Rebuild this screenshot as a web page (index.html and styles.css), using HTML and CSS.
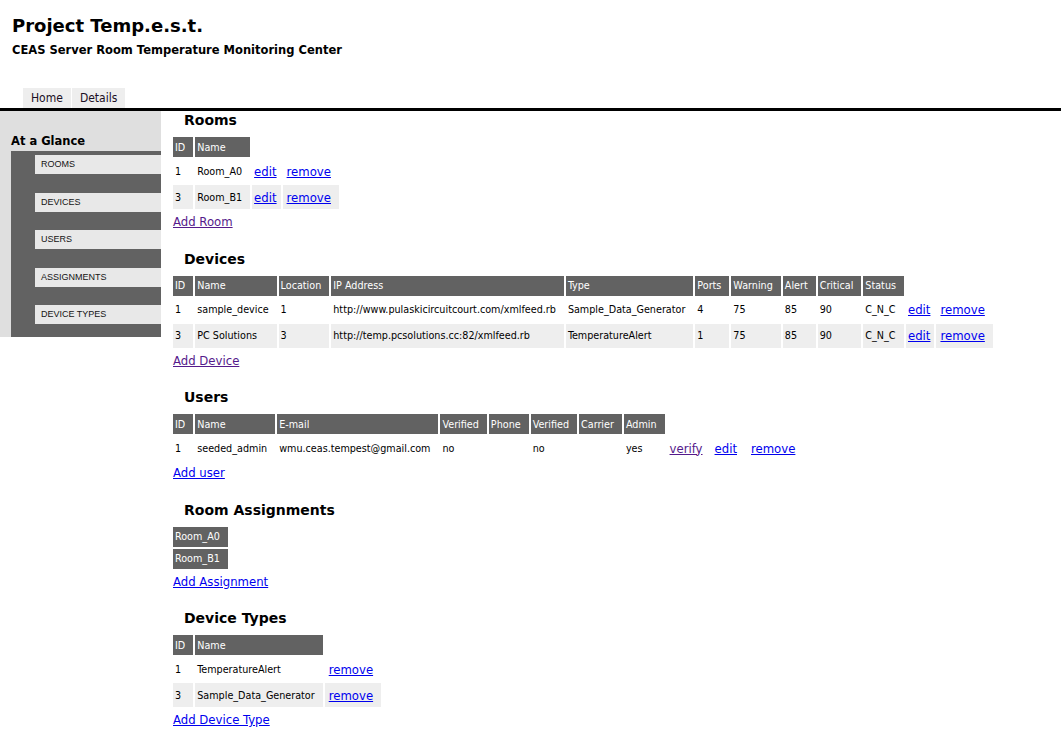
FILE: index.html
```html
<!DOCTYPE html>
<html>
<head>
<meta charset="utf-8">
<title>Project Temp.e.s.t.</title>
<link rel="stylesheet" href="styles.css">
</head>
<body>
<header class="masthead">
  <h1 class="title">Project Temp.e.s.t.</h1>
  <p class="subtitle">CEAS Server Room Temperature Monitoring Center</p>
</header>
<nav class="tabs">
  <a class="tab" href="#">Home</a>
  <a class="tab" href="#">Details</a>
</nav>
<div class="layout">
  <aside class="sidebar">
    <h3 class="sidebar-title">At a Glance</h3>
    <ul class="menu">
      <li>ROOMS</li>
      <li>DEVICES</li>
      <li>USERS</li>
      <li>ASSIGNMENTS</li>
      <li>DEVICE TYPES</li>
    </ul>
  </aside>
  <main class="content">
    <section class="section">
      <h2 class="section-title">Rooms</h2>
      <table class="grid">
        <tr><th>ID</th><th>Name</th></tr>
        <tr><td>1</td><td>Room_A0</td><td class="act act-edit"><a href="#">edit</a></td><td class="act act-remove"><a href="#">remove</a></td></tr>
        <tr class="alt"><td>3</td><td>Room_B1</td><td class="act act-edit"><a href="#">edit</a></td><td class="act act-remove"><a href="#">remove</a></td></tr>
      </table>
      <div class="add-row"><a class="visited" href="#">Add Room</a></div>
    </section>

    <section class="section">
      <h2 class="section-title">Devices</h2>
      <table class="grid">
        <tr><th>ID</th><th>Name</th><th>Location</th><th>IP Address</th><th>Type</th><th>Ports</th><th>Warning</th><th>Alert</th><th>Critical</th><th>Status</th></tr>
        <tr><td>1</td><td>sample_device</td><td>1</td><td>http://www.pulaskicircuitcourt.com/xmlfeed.rb</td><td>Sample_Data_Generator</td><td>4</td><td>75</td><td>85</td><td>90</td><td>C_N_C</td><td class="act act-edit"><a href="#">edit</a></td><td class="act act-remove"><a href="#">remove</a></td></tr>
        <tr class="alt"><td>3</td><td>PC Solutions</td><td>3</td><td>http://temp.pcsolutions.cc:82/xmlfeed.rb</td><td>TemperatureAlert</td><td>1</td><td>75</td><td>85</td><td>90</td><td>C_N_C</td><td class="act act-edit"><a href="#">edit</a></td><td class="act act-remove"><a href="#">remove</a></td></tr>
      </table>
      <div class="add-row"><a class="visited" href="#">Add Device</a></div>
    </section>

    <section class="section">
      <h2 class="section-title">Users</h2>
      <table class="grid">
        <tr><th>ID</th><th>Name</th><th>E-mail</th><th>Verified</th><th>Phone</th><th>Verified</th><th>Carrier</th><th>Admin</th></tr>
        <tr><td>1</td><td>seeded_admin</td><td>wmu.ceas.tempest@gmail.com</td><td>no</td><td></td><td>no</td><td></td><td>yes</td><td class="act act-verify"><a class="visited" href="#">verify</a></td><td class="act act-uedit"><a href="#">edit</a></td><td class="act act-remove"><a href="#">remove</a></td></tr>
      </table>
      <div class="add-row"><a href="#">Add user</a></div>
    </section>

    <section class="section">
      <h2 class="section-title">Room Assignments</h2>
      <table class="grid">
        <tr><th>Room_A0</th></tr>
        <tr><th>Room_B1</th></tr>
      </table>
      <div class="add-row"><a href="#">Add Assignment</a></div>
    </section>

    <section class="section">
      <h2 class="section-title">Device Types</h2>
      <table class="grid">
        <tr><th>ID</th><th>Name</th></tr>
        <tr><td>1</td><td>TemperatureAlert</td><td class="act act-remove"><a href="#">remove</a></td></tr>
        <tr class="alt"><td>3</td><td>Sample_Data_Generator</td><td class="act act-remove"><a href="#">remove</a></td></tr>
      </table>
      <div class="add-row"><a href="#">Add Device Type</a></div>
    </section>
  </main>
</div>
</body>
</html>
```
FILE: styles.css
```css
html, body {
  margin: 0;
  padding: 0;
  background: #ffffff;
  color: #000000;
}

body {
  font-family: "DejaVu Sans Condensed", "DejaVu Sans", sans-serif;
  font-stretch: condensed;
  font-size: 11px;
}

.masthead {
  padding-left: 12px;
}

.title {
  margin: 15px 0 0 0;
  font-family: "DejaVu Sans", sans-serif;
  font-stretch: normal;
  font-weight: bold;
  font-size: 18px;
  line-height: 22px;
}

.subtitle {
  margin: 6px 0 0 0;
  font-family: "DejaVu Sans", sans-serif;
  font-stretch: normal;
  font-weight: bold;
  font-size: 11.5px;
  line-height: 14px;
}

.tabs {
  display: flex;
  gap: 1px;
  margin-top: 31px;
  padding-left: 23px;
  border-bottom: 3px solid #000000;
}

.tab {
  display: block;
  height: 20px;
  line-height: 20px;
  padding: 0 8px;
  background: #eeeeee;
  color: #1a0f24;
  text-decoration: none;
  font-size: 12px;
}

.layout {
  display: flex;
  align-items: flex-start;
  gap: 12px;
}

.sidebar {
  flex: 0 0 161px;
  width: 161px;
  background: #dfdfdf;
  padding-top: 23px;
}

.sidebar-title {
  margin: 0 0 3px 11px;
  font-family: "DejaVu Sans", sans-serif;
  font-stretch: normal;
  font-weight: bold;
  font-size: 11.5px;
  line-height: 14px;
}

.menu {
  list-style: none;
  margin: 0 0 0 11px;
  padding: 4px 0 13px 24px;
  background: #626262;
  display: flex;
  flex-direction: column;
  gap: 18.5px;
}

.menu li {
  height: 19px;
  line-height: 19px;
  padding-left: 6px;
  background: #e8e8e8;
  font-family: "Liberation Sans", Arial, sans-serif;
  font-stretch: normal;
  font-size: 9px;
  color: #141414;
}

.content {
  flex: 1 1 auto;
  min-width: 0;
}

.section {
  margin-bottom: 19.5px;
}

.section-title {
  margin: 0 0 6px 11px;
  font-family: "DejaVu Sans", sans-serif;
  font-stretch: normal;
  font-weight: bold;
  font-size: 14px;
  line-height: 18px;
}

.grid {
  border-collapse: separate;
  border-spacing: 2px;
  margin-left: -2px;
}

.grid th {
  height: 20px;
  padding: 0 8px 0 2px;
  background: #626262;
  color: #ffffff;
  font-weight: normal;
  font-size: 10.7px;
  text-align: left;
  vertical-align: middle;
  white-space: nowrap;
}

.grid td {
  height: 24px;
  padding: 0 8px 0 2px;
  font-size: 10.7px;
  text-align: left;
  vertical-align: middle;
  white-space: nowrap;
}

.grid tr.alt td {
  background: #eeeeee;
}

.grid td.act {
  font-size: 13px;
}

.grid td.act-edit {
  padding: 0 4px 0 2px;
}

.grid td.act-remove {
  padding: 0 8px 0 4px;
}

.grid td.act-verify {
  padding: 0 8px 0 3px;
}

.grid td.act-uedit {
  padding: 0 8px 0 2px;
}

a {
  color: #0000ee;
}

a.visited {
  color: #551a8b;
}

.add-row {
  margin-top: 3px;
  line-height: 16px;
  font-size: 13px;
}
```
